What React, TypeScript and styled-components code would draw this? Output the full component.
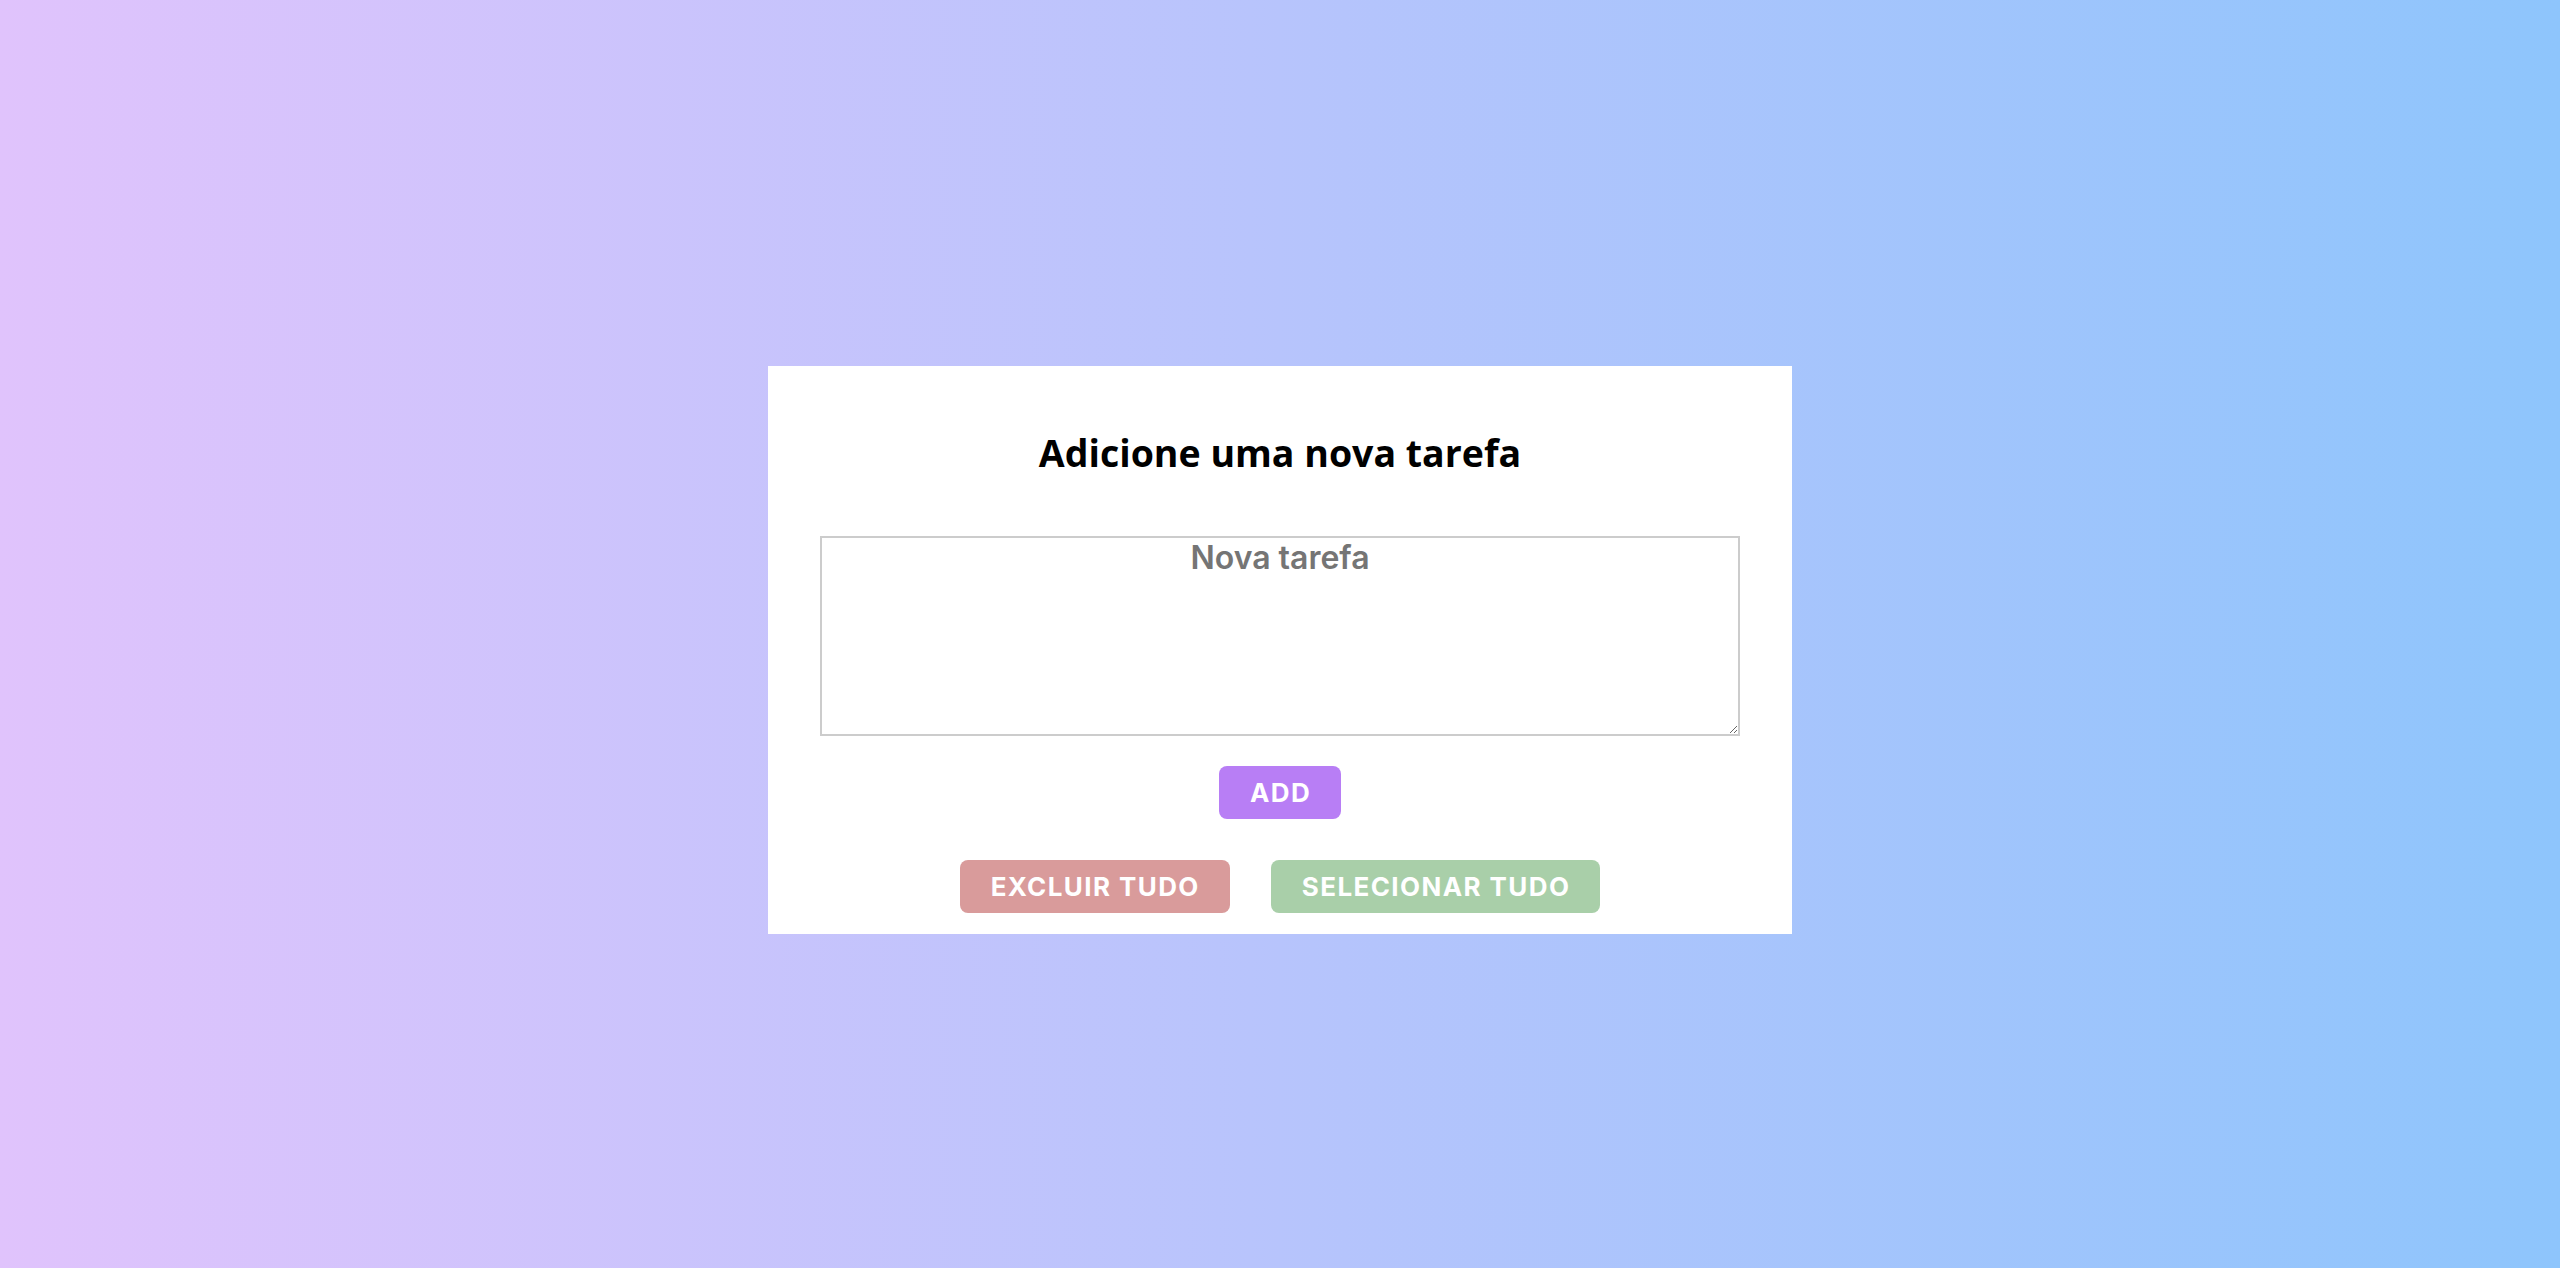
import React from "react";
import styled, { createGlobalStyle } from "styled-components";

const GlobalStyle = createGlobalStyle`
  html, body {
    margin: 0;
    padding: 0;
  }
  body {
    min-height: 100vh;
    background: linear-gradient(to right, #e0c3fc, #8ec5fc);
    font-family: "Inter", "Liberation Sans", sans-serif;
  }
  * { box-sizing: border-box; }
`;

const Page = styled.main`
  min-height: 100vh;
  display: flex;
  justify-content: center;
  align-items: flex-start;
  padding-top: 366px;
`;

const Card = styled.section`
  width: 1024px;
  background: #ffffff;
  display: flex;
  flex-direction: column;
  align-items: center;
  padding: 62px 0 21px;
`;

const Title = styled.h1`
  margin: 0;
  font-family: "Open Sans", "Noto Sans", sans-serif;
  font-weight: 700;
  font-size: 37.5px;
  line-height: 49px;
  color: #000;
`;

const TaskInput = styled.textarea`
  margin-top: 59px;
  width: 920px;
  height: 200px;
  border: 2px solid #cccccc;
  padding: 0;
  font-family: "Inter", "Liberation Sans", sans-serif;
  font-weight: 600;
  font-size: 32px;
  text-align: center;
  color: #333;
  outline: none;
  &::placeholder {
    color: #757575;
  }
`;

const Button = styled.button<{ $bg: string }>`
  border: none;
  border-radius: 8px;
  background: ${(p) => p.$bg};
  color: #ffffff;
  font-family: "Inter", "Liberation Sans", sans-serif;
  font-weight: 700;
  font-size: 26px;
  letter-spacing: 1.4px;
  height: 53px;
  padding: 0 30px 0 31px;
  cursor: pointer;
`;

const AddRow = styled.div`
  margin-top: 30px;
  display: flex;
  justify-content: center;
`;

const ActionRow = styled.div`
  margin-top: 41px;
  display: flex;
  justify-content: center;
  gap: 41px;
`;

export default function App() {
  return (
    <>
      <GlobalStyle />
      <Page>
        <Card>
          <Title>Adicione uma nova tarefa</Title>
          <TaskInput placeholder="Nova tarefa" />
          <AddRow>
            <Button $bg="#b87ef5">ADD</Button>
          </AddRow>
          <ActionRow>
            <Button $bg="#d99b9b">EXCLUIR TUDO</Button>
            <Button $bg="#a9cfa9">SELECIONAR TUDO</Button>
          </ActionRow>
        </Card>
      </Page>
    </>
  );
}
